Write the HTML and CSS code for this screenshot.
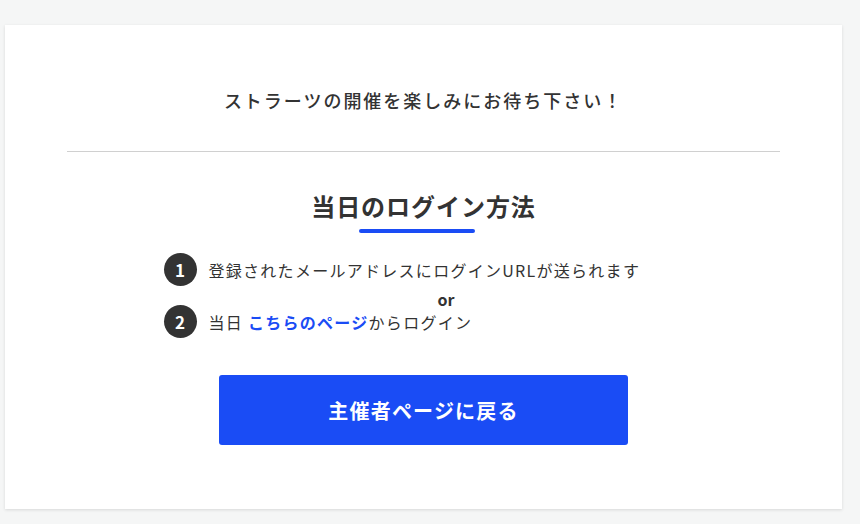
FILE: index.html
```html
<!DOCTYPE html>
<html lang="ja">
<head>
    <meta charset="UTF-8">
    <meta name="viewport" content="width=device-width, initial-scale=1.0">
    <title>ストラーツ</title>
    <link rel="stylesheet" href="styles.css">
</head>
<body>
    <div class="card">
        <p class="lead">ストラーツの開催を楽しみにお待ち下さい！</p>
        <hr class="divider">

        <h2 class="section-title">当日のログイン方法</h2>

        <div class="steps">
            <div class="step">
                <span class="step-num">1</span>
                <span class="step-text">登録されたメールアドレスにログインURLが送られます</span>
            </div>
            <div class="step-or">or</div>
            <div class="step">
                <span class="step-num">2</span>
                <span class="step-text">当日 <a href="#" class="link">こちらのページ</a>からログイン</span>
            </div>
        </div>

        <a href="#" class="back-button">主催者ページに戻る</a>
    </div>
</body>
</html>
```

FILE: styles.css
```css
body {
    font-family: "Noto Sans CJK JP", "Noto Sans", sans-serif;
    background-color: #f5f6f6;
    margin: 0;
    padding: 25px 18px 15px 5px;
    color: #333;
}
.card {
    background-color: #fff;
    box-shadow: 0 1px 3px rgba(0, 0, 0, 0.12);
    padding: 62px 62px 64px;
    text-align: center;
}
.lead {
    font-size: 18px;
    font-weight: 500;
    line-height: 27px;
    letter-spacing: 0.11em;
    margin: 0;
}
.divider {
    border: none;
    border-top: 1px solid #d0d0d0;
    margin: 37px 0 0;
}
.section-title {
    font-size: 24px;
    font-weight: 700;
    line-height: 36px;
    letter-spacing: 0.04em;
    margin: 36px 0 0;
    display: inline-block;
}
.section-title::after {
    content: "";
    display: block;
    width: 116px;
    height: 4px;
    border-radius: 2px;
    background-color: #1a4cf5;
    margin: 5px calc(50% - 52px) 0 calc(50% - 64px);
}
.steps {
    width: 520px;
    margin: 20px auto 0;
    text-align: left;
}
.step {
    display: flex;
    align-items: center;
    gap: 12px;
    font-size: 16px;
    letter-spacing: 0.08em;
}
.step-num {
    width: 33px;
    height: 33px;
    border-radius: 50%;
    background-color: #333;
    color: #fff;
    font-weight: 700;
    font-size: 17px;
    letter-spacing: 0;
    display: flex;
    align-items: center;
    justify-content: center;
    flex-shrink: 0;
}
.step-or {
    padding: 4px 0 0 45px;
    margin-bottom: -4px;
    text-align: center;
    font-weight: 700;
    font-size: 16px;
    line-height: 19px;
}
.link {
    color: #1a4cf5;
    font-weight: 700;
    text-decoration: none;
}
.back-button {
    display: flex;
    align-items: center;
    justify-content: center;
    width: 409px;
    height: 70px;
    margin: 37px auto 0;
    background-color: #1a4cf5;
    color: #fff;
    border-radius: 3px;
    font-size: 20px;
    font-weight: 700;
    letter-spacing: 0.06em;
    text-decoration: none;
}
```
